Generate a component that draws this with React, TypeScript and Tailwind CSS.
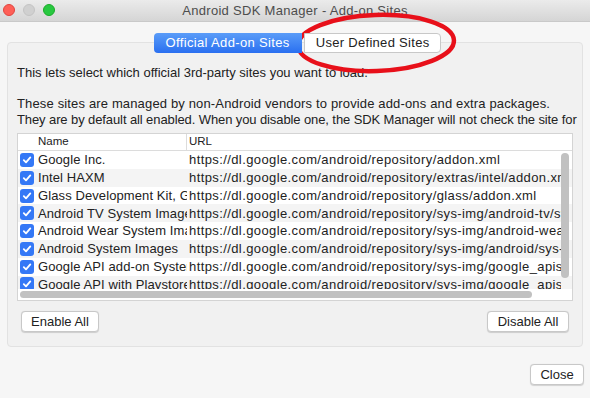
const rows = [
  ["Google Inc.", "https://dl.google.com/android/repository/addon.xml"],
  ["Intel HAXM", "https://dl.google.com/android/repository/extras/intel/addon.xml"],
  ["Glass Development Kit, Google Inc.", "https://dl.google.com/android/repository/glass/addon.xml"],
  ["Android TV System Images", "https://dl.google.com/android/repository/sys-img/android-tv/sys-img.xml"],
  ["Android Wear System Images", "https://dl.google.com/android/repository/sys-img/android-wear/sys-img.xml"],
  ["Android System Images", "https://dl.google.com/android/repository/sys-img/android/sys-img.xml"],
  ["Google API add-on System Images", "https://dl.google.com/android/repository/sys-img/google_apis/sys-img.xml"],
  ["Google API with Playstore System Images", "https://dl.google.com/android/repository/sys-img/google_apis_playstore/sys-img.xml"],
];

function Check() {
  return (
    <span className="flex h-[14px] w-[14px] shrink-0 items-center justify-center rounded-[3px] bg-[#3478f6]">
      <svg width="10" height="10" viewBox="0 0 10 10">
        <path d="M1.8 5.2 L4 7.4 L8.3 2.4" fill="none" stroke="white" strokeWidth="1.8" strokeLinecap="round" strokeLinejoin="round" />
      </svg>
    </span>
  );
}

function Btn({ label, className = "" }: { label: string; className?: string }) {
  return (
    <div
      className={
        "flex h-[21px] items-center justify-center rounded-[4px] border border-[#c8c8c8] bg-white text-[13px] text-[#222] shadow-[0_0.5px_1px_rgba(0,0,0,0.15)] " +
        className
      }
    >
      {label}
    </div>
  );
}

export default function App() {
  return (
    <div
      className="relative flex h-[398px] w-[590px] flex-col overflow-hidden bg-[#f6f6f6] text-[#222]"
      style={{ fontFamily: '"Liberation Sans", Arial, sans-serif' }}
    >
      {/* title bar */}
      <div className="relative flex h-[22px] shrink-0 items-center justify-center border-b border-[#c9c9c9] bg-gradient-to-b from-[#ebebeb] to-[#d5d5d5]">
        <div className="absolute left-[3px] top-[4px] flex gap-[8px]">
          <span className="h-[12px] w-[12px] rounded-full border border-[#e0443e] bg-[#fe5f57]" />
          <span className="h-[12px] w-[12px] rounded-full border border-[#c4c4c4] bg-[#d0d0d0]" />
          <span className="h-[12px] w-[12px] rounded-full border border-[#1aab29] bg-[#28c840]" />
        </div>
        <span className="text-[13px] tracking-[0.3px] text-[#4d4d4d]">Android SDK Manager - Add-on Sites</span>
      </div>

      {/* tabs */}
      <div className="relative z-10 mt-[11px] flex h-[20px] justify-center pl-[5px]">
        <div className="flex h-[20px] items-center rounded-l-[4px] bg-gradient-to-b from-[#5a9cf8] to-[#2a6ff0] px-[12px] text-[13px] tracking-[0.35px] text-white">
          Official Add-on Sites
        </div>
        <div className="ml-[2px] flex h-[20px] items-center rounded-r-[4px] border border-[#c8c8c8] bg-white px-[11px] text-[13px] tracking-[0.3px] text-[#222]">
          User Defined Sites
        </div>
      </div>

      {/* group box */}
      <div className="mx-[7px] mt-[-11px] flex h-[305px] flex-col rounded-[4px] border border-[#e2e2e2] bg-[#f1f1f1] px-[9px]">
        <div className="mt-[22px] whitespace-nowrap text-[13px] leading-[15.5px]">
          <div>This lets select which official 3rd-party sites you want to load.</div>
          <div>&nbsp;</div>
          <div className="tracking-[0.15px]">These sites are managed by non-Android vendors to provide add-ons and extra packages.</div>
          <div className="tracking-[-0.1px]">They are by default all enabled. When you disable one, the SDK Manager will not check the site for</div>
        </div>

        {/* table */}
        <div className="relative mt-[6px] flex h-[168px] flex-col overflow-hidden border border-[#d4d4d4] bg-white text-[13px]">
          <div className="flex h-[17px] shrink-0 items-center border-b border-[#dcdcdc] text-[11.5px]">
            <div className="w-[168px] pl-[20px]">Name</div>
            <div className="h-full w-px bg-[#dcdcdc]" />
            <div className="pl-[2px]">URL</div>
          </div>
          {rows.map(([name, url], i) => (
            <div
              key={name}
              className={"flex h-[17.8px] shrink-0 items-center " + (i % 2 === 1 ? "bg-[#f4f4f4]" : "bg-white")}
            >
              <div className="flex w-[169px] shrink-0 items-center overflow-hidden whitespace-nowrap pl-[2px]">
                <Check />
                <span className="ml-[4px] tracking-[0.1px]">{name}</span>
              </div>
              <div className="w-[374px] overflow-hidden whitespace-nowrap pl-[2px] tracking-[0.4px]">{url}</div>
            </div>
          ))}
          {/* vertical scrollbar */}
          <div className="absolute right-[3px] top-[19px] h-[125px] w-[8px] rounded-full bg-[#c1c1c1]" />
          {/* horizontal scrollbar */}
          <div className="absolute bottom-0 left-0 right-0 flex h-[11px] items-center bg-white px-[2px]">
            <div className="h-[7px] w-[512px] rounded-full bg-[#c1c1c1]" />
          </div>
        </div>

        <div className="mt-[10px] flex justify-between px-[4px]">
          <Btn label="Enable All" className="w-[78px]" />
          <Btn label="Disable All" className="w-[82px]" />
        </div>
      </div>

      <div className="mt-[17px] flex justify-end pr-[6px]">
        <Btn label="Close" className="w-[54px]" />
      </div>

      {/* annotation ellipse */}
      <svg className="pointer-events-none absolute left-0 top-0" width="590" height="398">
        <ellipse cx="376" cy="43" rx="78" ry="28" fill="none" stroke="#e8101a" strokeWidth="4.5" transform="rotate(-2 376 43)" />
      </svg>
    </div>
  );
}
